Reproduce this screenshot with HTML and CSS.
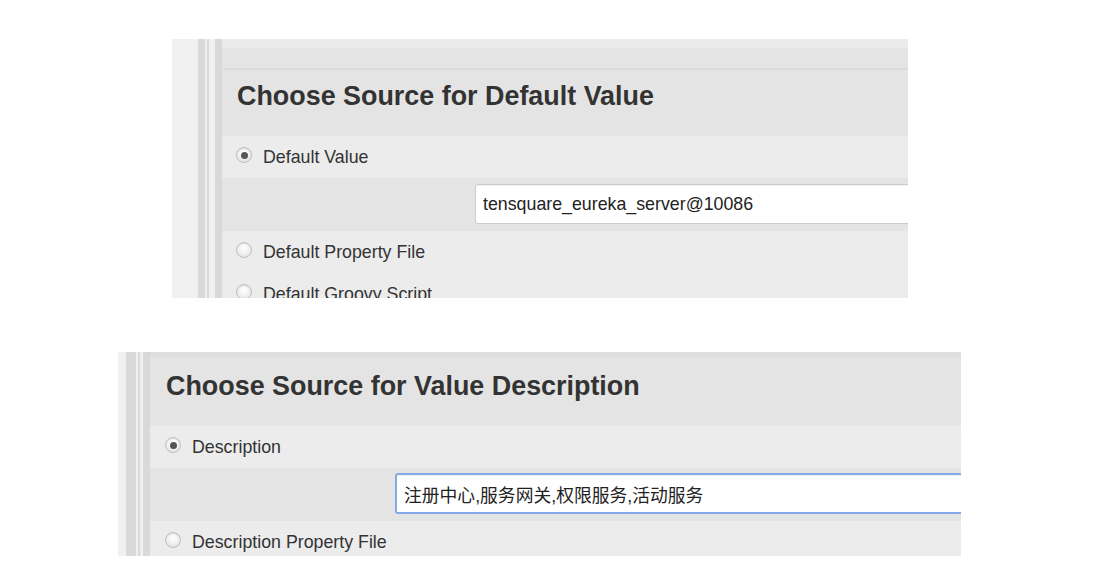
FILE: index.html
```html
<!DOCTYPE html>
<html>
<head>
<meta charset="utf-8">
<link rel="stylesheet" href="styles.css">
</head>
<body>
<div class="page">
  <div class="shot shot1">
    <div class="rail">
      <span class="s light w26"></span><span class="s gray w7"></span><span class="s light w2"></span><span class="s gray w2"></span><span class="s light w6"></span><span class="s gray w7"></span>
    </div>
    <div class="content">
      <div class="topbar"></div>
      <div class="subbar"></div>
      <div class="head head1"><h2>Choose Source for Default Value</h2></div>
      <div class="opt"><span class="radio checked"></span><span class="label">Default Value</span></div>
      <div class="field f1"><div class="input">tensquare_eureka_server@10086</div></div>
      <div class="opt"><span class="radio"></span><span class="label">Default Property File</span></div>
      <div class="opt"><span class="radio"></span><span class="label">Default Groovy Script</span></div>
    </div>
  </div>

  <div class="shot shot2">
    <div class="rail">
      <span class="s light w8"></span><span class="s gray w10"></span><span class="s light w2"></span><span class="s gray w2"></span><span class="s light w3"></span><span class="s gray w7"></span>
    </div>
    <div class="content">
      <div class="head head2"><h2>Choose Source for Value Description</h2></div>
      <div class="opt"><span class="radio checked"></span><span class="label">Description</span></div>
      <div class="field f2"><div class="input focus">注册中心,服务网关,权限服务,活动服务</div></div>
      <div class="opt"><span class="radio"></span><span class="label">Description Property File</span></div>
    </div>
  </div>
</div>
</body>
</html>
```
FILE: styles.css
```css
html, body {
  margin: 0;
  padding: 0;
  background: #ffffff;
}
body {
  font-family: "Liberation Sans", Arial, "Noto Sans CJK SC", sans-serif;
  color: #333333;
}
.page {
  display: flex;
  flex-direction: column;
  align-items: flex-start;
}
.shot {
  display: flex;
  overflow: hidden;
  background: #ececec;
}
.shot1 {
  margin: 39px 0 0 172px;
  width: 736px;
  height: 259px;
}
.shot2 {
  margin: 54px 0 0 118px;
  width: 843px;
  height: 204px;
}
.rail {
  display: flex;
  flex: none;
}
.s { display: block; }
.light { background: #f0f0f0; }
.gray { background: #d9d9d9; }
.w2 { width: 2px; }
.w3 { width: 3px; }
.w6 { width: 6px; }
.w7 { width: 7px; }
.w8 { width: 8px; }
.w10 { width: 10px; }
.w26 { width: 26px; }
.content {
  flex: 1;
  min-width: 0;
  display: flex;
  flex-direction: column;
  overflow: hidden;
}
.topbar {
  height: 9px;
  background: #ebebeb;
  flex: none;
}
.subbar {
  height: 20px;
  background: #e4e4e4;
  border-bottom: 2px solid #dcdcdc;
  flex: none;
}
.head {
  box-sizing: border-box;
  background: #e4e4e4;
  display: flex;
  align-items: center;
  flex: none;
}
.head1 {
  height: 66px;
  padding: 0 0 14px 15px;
}
.head2 {
  height: 74px;
  border-top: 5px solid #dedede;
  padding: 0 0 10px 16px;
}
h2 {
  margin: 0;
  font-size: 26.9px;
  font-weight: bold;
  color: #333333;
  white-space: nowrap;
}
.opt {
  height: 42px;
  display: flex;
  align-items: center;
  padding-left: 14px;
  background: #ececec;
  flex: none;
}
.shot2 .opt { padding-left: 15px; }
.label {
  font-size: 17.8px;
  color: #333333;
  white-space: nowrap;
}
.radio {
  width: 14px;
  height: 14px;
  border-radius: 50%;
  border: 1px solid #c0c0c0;
  background: radial-gradient(circle at 50% 35%, #ffffff 0%, #efefef 55%, #d4d4d4 100%);
  box-shadow: inset 0 1px 1px rgba(0,0,0,0.1);
  margin-right: 11px;
  margin-top: -4px;
  position: relative;
  flex: none;
}
.radio.checked::after {
  content: "";
  position: absolute;
  left: 3.5px;
  top: 3.5px;
  width: 7px;
  height: 7px;
  border-radius: 50%;
  background: #555555;
}
.field {
  box-sizing: border-box;
  background: #e4e4e4;
  display: flex;
  align-items: flex-start;
  flex: none;
}
.f1 { padding: 6px 0 0 253px; height: 53px; }
.f2 { padding: 5px 0 0 245px; height: 53px; }
.input {
  flex: none;
  width: 700px;
  height: 40px;
  box-sizing: border-box;
  background: #ffffff;
  border: 1px solid #cccccc;
  border-radius: 3px;
  box-shadow: inset 0 1px 1px rgba(0,0,0,0.06);
  padding: 1px 0 0 7px;
  display: flex;
  align-items: center;
  font-size: 17.8px;
  color: #222222;
  white-space: nowrap;
}
.input.focus {
  height: 41px;
  border: 2px solid #85a9e6;
  padding-left: 7px;
}
```
